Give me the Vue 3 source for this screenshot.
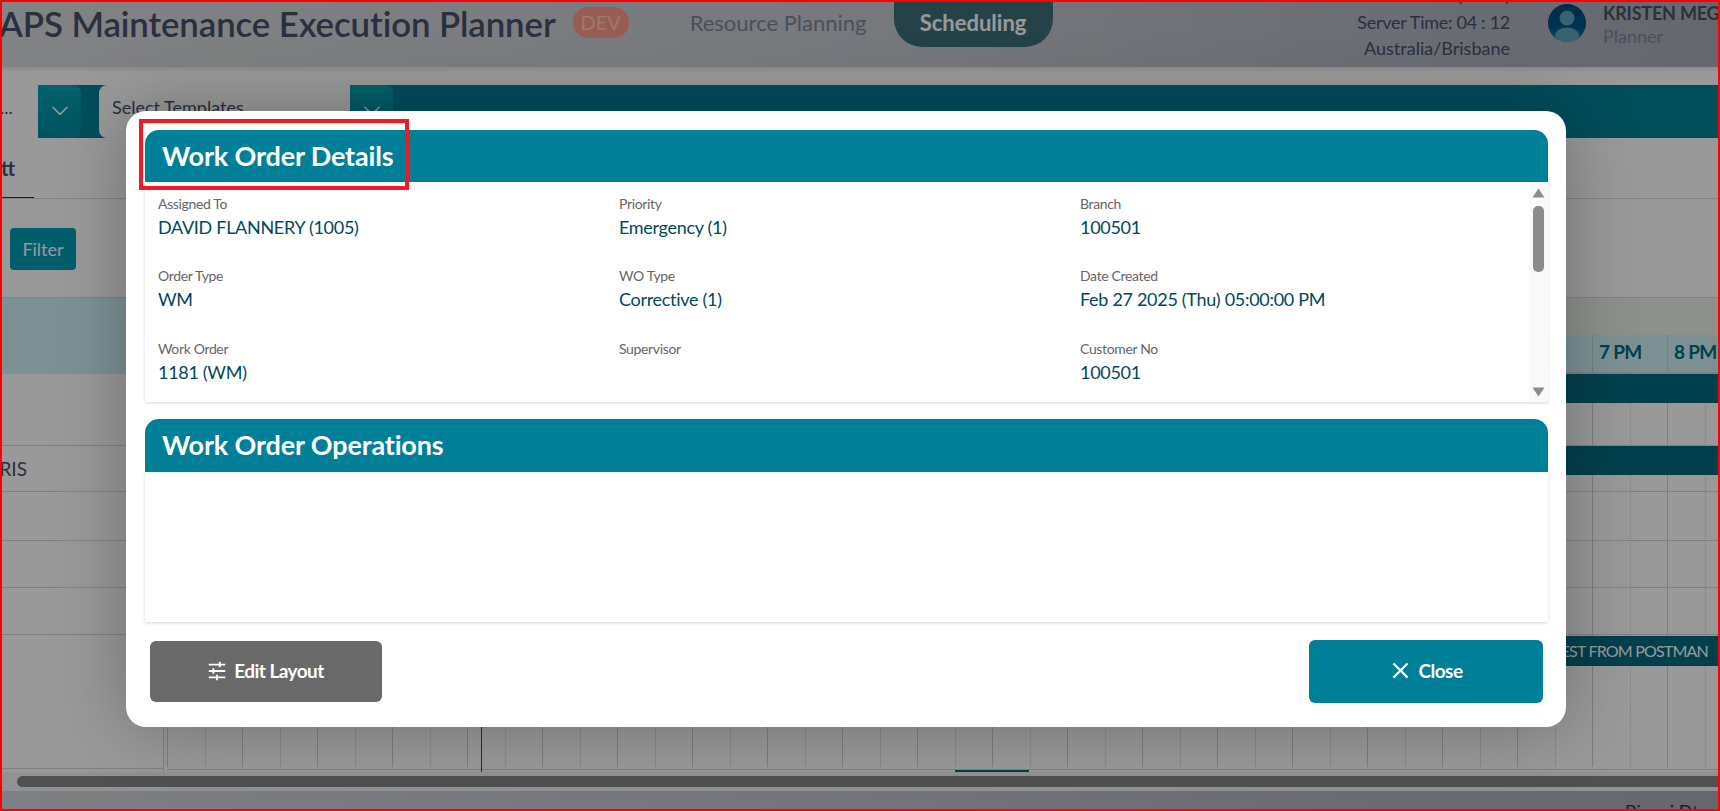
<template>
  <div class="page">
    <header class="topbar">
      <h1 class="app-title">APS Maintenance Execution Planner</h1>
      <span class="env-badge">DEV</span>
      <nav class="nav">
        <a class="nav-link">Resource Planning</a>
        <a class="nav-link active">Scheduling</a>
      </nav>
      <div class="clock">
        <div class="clock-local">Local Time (AEST)</div>
        <div class="clock-server">Server Time: 04 : 12</div>
        <div>Australia/Brisbane</div>
      </div>
      <div class="user">
        <svg class="avatar" viewBox="0 0 38 38">
          <defs>
            <linearGradient id="avatarBg" x1="0" y1="0" x2="0" y2="1">
              <stop offset="0" stop-color="#00467c" />
              <stop offset="0.6" stop-color="#00558a" />
              <stop offset="1" stop-color="#1b7f9f" />
            </linearGradient>
            <clipPath id="avatarClip"><circle cx="19" cy="19" r="19" /></clipPath>
          </defs>
          <circle cx="19" cy="19" r="19" fill="url(#avatarBg)" />
          <g clip-path="url(#avatarClip)" fill="#5aa3bd">
            <circle cx="19" cy="14" r="7.5" />
            <ellipse cx="19" cy="32" rx="12" ry="8.5" />
          </g>
        </svg>
        <div class="user-text">
          <div class="user-name">KRISTEN MEGAN</div>
          <div class="user-role">Planner</div>
        </div>
      </div>
    </header>

    <div class="toolbar">
      <div class="select first"><span>...</span></div>
      <button class="select-btn" type="button">
        <svg viewBox="0 0 24 24"><path d="M5 9l7 7 7-7" /></svg>
      </button>
      <div class="select templates"><span>Select Templates</span></div>
      <button class="select-btn" type="button">
        <svg viewBox="0 0 24 24"><path d="M5 9l7 7 7-7" /></svg>
      </button>
    </div>

    <div class="tabs">
      <span class="tab">Gantt</span>
    </div>

    <div class="filters">
      <button class="filter-btn" type="button">Filter</button>
    </div>

    <div class="gantt">
      <div class="gantt-left">
        <div class="left-head"></div>
        <div v-for="row in rows" :key="row.id" class="left-cell" :style="{ height: row.height + 'px' }">
          {{ row.label }}
        </div>
      </div>
      <div class="gantt-right">
        <div class="hours-band"></div>
        <div class="hours">
          <div v-for="h in hours" :key="h" class="hour">{{ h }}</div>
        </div>
        <div class="grid-rows">
          <div class="columns">
            <div v-for="h in hours" :key="h" class="column"></div>
          </div>
          <div v-for="row in rows" :key="row.id" class="grid-row" :style="{ height: row.height + 'px' }">
            <div v-if="row.bar" class="bar" :class="row.bar.kind">{{ row.bar.text }}</div>
          </div>
        </div>
        <div class="now-line"></div>
        <div class="range-mark"></div>
      </div>
    </div>

    <div class="scroll-track"><div class="scroll-thumb"></div></div>

    <footer class="footer"><span>Binnai Dt</span></footer>

    <div class="overlay">
      <section class="modal">
        <div class="panel-head first-head">Work Order Details</div>
        <div class="details">
          <div class="fields">
            <div v-for="f in fields" :key="f.label" class="field">
              <div class="field-label">{{ f.label }}</div>
              <div class="field-value">{{ f.value }}</div>
            </div>
          </div>
          <div class="scrollbar">
            <svg class="arrow" viewBox="0 0 13 10"><path d="M6.5 0.5L12.5 9.5H0.5Z" /></svg>
            <div class="thumb-track"><div class="thumb"></div></div>
            <svg class="arrow" viewBox="0 0 13 10"><path d="M0.5 0.5H12.5L6.5 9.5Z" /></svg>
          </div>
        </div>

        <div class="panel-head second-head">Work Order Operations</div>
        <div class="operations"></div>

        <div class="modal-actions">
          <button class="btn edit" type="button">
            <svg viewBox="0 0 24 24"><path d="M3 5h18M3 12h18M3 19h18M15 2v6M8 9v6M12 16v6" /></svg>
            Edit Layout
          </button>
          <button class="btn close" type="button">
            <svg viewBox="0 0 24 24"><path d="M19 6.41 17.59 5 12 10.59 6.41 5 5 6.41 10.59 12 5 17.59 6.41 19 12 13.41 17.59 19 19 17.59 13.41 12z" /></svg>
            Close
          </button>
        </div>
      </section>
    </div>

    <div class="highlight"></div>
    <div class="frame"></div>
  </div>
</template>

<script setup>
const fields = [
  { label: 'Assigned To', value: 'DAVID FLANNERY (1005)' },
  { label: 'Priority', value: 'Emergency (1)' },
  { label: 'Branch', value: '100501' },
  { label: 'Order Type', value: 'WM' },
  { label: 'WO Type', value: 'Corrective (1)' },
  { label: 'Date Created', value: 'Feb 27 2025 (Thu) 05:00:00 PM' },
  { label: 'Work Order', value: '1181 (WM)' },
  { label: 'Supervisor', value: '' },
  { label: 'Customer No', value: '100501' }
];

const rows = [
  { id: 1, height: 72, label: '', bar: { kind: 'group', text: '' } },
  { id: 2, height: 46, label: 'RIS', bar: { kind: 'group', text: '' } },
  { id: 3, height: 49, label: '' },
  { id: 4, height: 47, label: '' },
  { id: 5, height: 47, label: '' },
  { id: 6, height: 134, label: '', bar: { kind: 'task', text: 'TEST FROM POSTMAN' } }
];

const hours = [];
for (let i = 0; i < 21; i++) {
  const h = i % 12 === 0 ? 12 : i % 12;
  hours.push(`${h} ${i < 12 ? 'AM' : 'PM'}`);
}
</script>

<style>
html,
body {
  margin: 0;
  overflow: hidden;
}
</style>

<style scoped>
.page {
  position: relative;
  width: 1720px;
  height: 811px;
  overflow: hidden;
  display: flex;
  flex-direction: column;
  background: #fff;
  font-family: Lato, "Liberation Sans", sans-serif;
  color: #46506a;
}

.topbar {
  flex: 0 0 67px;
  display: flex;
  align-items: flex-start;
  overflow: hidden;
  background: linear-gradient(100deg, #d8dadc 0%, #c6c9d0 50%, #a8acb9 100%);
  box-shadow: 0 2px 5px rgba(0, 0, 0, 0.12);
  z-index: 1;
}

.app-title {
  margin: 2px 0 0 -1px;
  font-size: 34.8px;
  line-height: 44px;
  font-weight: 600;
  letter-spacing: -0.1px;
  color: #47506a;
  white-space: nowrap;
}

.env-badge {
  margin: 7px 0 0 17px;
  width: 56px;
  height: 31px;
  border-radius: 15px;
  background: #ff9a8a;
  color: #ffc9bd;
  font-size: 20px;
  line-height: 31px;
  text-align: center;
}

.nav {
  display: flex;
  align-items: flex-start;
  margin-left: 61px;
}

.nav-link {
  font-size: 22px;
  line-height: 45px;
  color: #7d8499;
  white-space: nowrap;
}

.nav-link.active {
  margin: -10px 0 0 27px;
  width: 159px;
  height: 57px;
  line-height: 66px;
  border-radius: 0 0 28px 28px;
  background: #3d6e78;
  color: #fff;
  font-size: 22px;
  font-weight: 700;
  text-align: center;
}

.clock {
  margin: -18px 0 0 auto;
  text-align: right;
  font-size: 18px;
  line-height: 26px;
  color: #47506a;
  white-space: nowrap;
}

.clock-local {
  margin-bottom: 1px;
}

.clock-server {
  letter-spacing: -0.28px;
}

.user {
  flex: 0 0 172px;
  margin-left: 38px;
  display: flex;
  gap: 17px;
  overflow: hidden;
}

.avatar {
  flex: 0 0 38px;
  width: 38px;
  height: 38px;
  margin-top: 4px;
}

.user-text {
  white-space: nowrap;
}

.user-name {
  margin-top: 2px;
  font-size: 18px;
  line-height: 23px;
  font-weight: 700;
  letter-spacing: -0.2px;
  color: #47506a;
}

.user-role {
  font-size: 18px;
  line-height: 23px;
  color: #7d8499;
}

.toolbar {
  margin-top: 18px;
  flex: 0 0 53px;
  display: flex;
  background: #008099;
}

.select {
  background: #fff;
  font-size: 18px;
  line-height: 44px;
  color: #47506a;
}

.select.first {
  width: 38px;
  text-align: left;
}

.select.templates {
  width: 251px;
  margin-left: 18px;
  padding-left: 13px;
  box-sizing: border-box;
  border-radius: 8px 0 0 8px;
}

.select-btn {
  width: 43px;
  padding: 0;
  border: none;
  border-radius: 0 8px 8px 0;
  background: linear-gradient(180deg, #00a4b4 0%, #008ba2 100%);
  display: flex;
  align-items: center;
  justify-content: center;
}

.select-btn svg {
  width: 26px;
  height: 26px;
  margin-top: -4px;
  fill: none;
  stroke: #fff;
  stroke-width: 1.4;
}

.tabs {
  flex: 0 0 61px;
  box-sizing: border-box;
  border-bottom: 1px solid #ddd;
  position: relative;
  overflow: hidden;
}

.tab {
  position: absolute;
  right: calc(100% - 15px);
  top: 17px;
  font-size: 20px;
  line-height: 26px;
  font-weight: 700;
  color: #47506a;
}

.tabs::after {
  content: "";
  position: absolute;
  left: 0;
  bottom: -1px;
  width: 34px;
  height: 2px;
  background: #0b3b45;
}

.filters {
  flex: 0 0 99px;
  box-sizing: border-box;
  padding: 29px 0 0 10px;
  border-bottom: 1px solid #d6d6d6;
}

.filter-btn {
  width: 66px;
  height: 42px;
  padding: 0;
  border: none;
  border-radius: 4px;
  background: #009cb4;
  color: #fff;
  font-family: inherit;
  font-size: 18px;
}

.gantt {
  flex: 0 0 474px;
  display: flex;
  gap: 3px;
  overflow: hidden;
}

.gantt-left {
  flex: 0 0 164px;
  min-width: 0;
  box-sizing: border-box;
  border-right: 1px solid #d6d6d6;
}

.left-head {
  height: 76px;
  background: #d0f2f8;
}

.left-cell {
  box-sizing: border-box;
  border-bottom: 1px solid #d6d6d6;
  display: flex;
  align-items: center;
  justify-content: flex-end;
  padding-right: 136px;
  font-size: 19px;
  color: #47506a;
  white-space: nowrap;
}

.gantt-right {
  position: relative;
  flex: 1;
  min-width: 0;
}

.hours-band {
  height: 37px;
  background: #edf2e8;
}

.hours {
  display: flex;
  height: 39px;
  box-sizing: border-box;
  border-bottom: 2px solid #cfd8d8;
  background: #d0f2f8;
}

.hour {
  flex: 0 0 75px;
  box-sizing: border-box;
  border-left: 1px solid #b9d4da;
  padding-left: 6px;
  font-size: 19px;
  line-height: 34px;
  font-weight: 700;
  letter-spacing: -0.7px;
  color: #006b85;
  white-space: nowrap;
}

.grid-rows {
  position: relative;
}

.columns {
  position: absolute;
  inset: 0 0 3px 0;
  display: flex;
}

.column {
  flex: 0 0 75px;
  box-sizing: border-box;
  border-left: 1px solid #d2d2d2;
  position: relative;
}

.column::after {
  content: "";
  position: absolute;
  left: 37px;
  top: 0;
  bottom: 0;
  border-left: 1px dotted #d2d2d2;
}

.grid-row {
  position: relative;
  box-sizing: border-box;
  border-bottom: 1px solid #d6d6d6;
}

.bar {
  height: 29px;
  background: #006b80;
}

.bar.task {
  height: 30px;
  margin: 1px 0 0 1210px;
  padding-right: 12px;
  text-align: right;
  color: #fff;
  font-size: 16px;
  letter-spacing: -0.8px;
  line-height: 30px;
  white-space: nowrap;
}

.now-line {
  position: absolute;
  left: 314px;
  top: 76px;
  bottom: 0;
  width: 1px;
  background: #ff0000;
}

.range-mark {
  position: absolute;
  left: 788px;
  bottom: 0;
  width: 74px;
  height: 2px;
  background: #006b80;
}

.scroll-track {
  flex: 0 0 19px;
  box-sizing: border-box;
  padding: 4px 0 4px 17px;
  background: #f4f4f4;
}

.scroll-thumb {
  height: 11px;
  border-radius: 6px 0 0 6px;
  background: #888;
}

.footer {
  flex: 1;
  position: relative;
  overflow: hidden;
  background: linear-gradient(100deg, #d2d6da 0%, #bfc3cc 50%, #a8acb9 100%);
}

.footer span {
  position: absolute;
  left: 1625px;
  top: 9px;
  font-size: 18px;
  color: #1d3552;
  white-space: nowrap;
}

.overlay {
  position: absolute;
  inset: 0;
  z-index: 2;
  background: rgba(0, 0, 0, 0.4);
  padding: 111px 0 0 126px;
}

.modal {
  width: 1440px;
  height: 616px;
  box-sizing: border-box;
  padding: 19px 18px 0 19px;
  border-radius: 20px;
  background: #fff;
  box-shadow: 0 0 70px rgba(0, 0, 0, 0.28);
  display: flex;
  flex-direction: column;
}

.panel-head {
  box-sizing: border-box;
  padding-left: 17px;
  border-radius: 14px 14px 0 0;
  background: #007f99;
  color: #fff;
  font-size: 27px;
  letter-spacing: -0.15px;
  font-weight: 700;
}

.first-head {
  flex: 0 0 52px;
  line-height: 52px;
}

.second-head {
  flex: 0 0 53px;
  line-height: 52px;
  margin-top: 17px;
}

.details,
.operations {
  box-shadow: 0 1px 3px rgba(0, 0, 0, 0.16);
}

.details {
  flex: 0 0 220px;
  display: flex;
  overflow: hidden;
}

.fields {
  flex: 1;
  min-width: 0;
  display: grid;
  grid-template-columns: 461px 461px 1fr;
  grid-auto-rows: 72.5px;
  padding: 12.9px 0 0 13px;
}

.field-label {
  font-size: 14px;
  letter-spacing: -0.35px;
  line-height: 18px;
  color: #666;
}

.field-value {
  margin-top: 2px;
  font-size: 18px;
  letter-spacing: -0.3px;
  line-height: 24px;
  color: #00495c;
}

.scrollbar {
  flex: 0 0 19px;
  box-sizing: border-box;
  padding: 6px 3px 5px;
  background: #fafafa;
  display: flex;
  flex-direction: column;
  justify-content: space-between;
}

.arrow {
  width: 13px;
  height: 10px;
  flex: none;
  fill: #8c8c8c;
}

.thumb-track {
  flex: 1;
  padding-top: 8px;
}

.thumb {
  width: 11px;
  margin-left: 1px;
  height: 66px;
  border-radius: 5px;
  background: #8c8c8c;
}

.operations {
  flex: 0 0 150px;
}

.modal-actions {
  display: flex;
  justify-content: space-between;
  align-items: center;
  padding: 18px 5px 0;
}

.btn {
  display: flex;
  align-items: center;
  justify-content: center;
  padding: 0 0 2px;
  border: none;
  border-radius: 6px;
  color: #fff;
  font-family: inherit;
  font-size: 19px;
  font-weight: 700;
}

.btn.edit {
  width: 232px;
  height: 61px;
  gap: 6px;
  background: #696969;
  letter-spacing: -0.55px;
}

.btn.edit svg {
  width: 22px;
  height: 22px;
  margin-left: -2px;
  fill: none;
  stroke: #fff;
  stroke-width: 2;
}

.btn.close {
  width: 234px;
  height: 63px;
  gap: 4px;
  background: #007f99;
  letter-spacing: -0.5px;
}

.btn.close svg {
  width: 27px;
  height: 27px;
  margin-left: -2px;
  fill: #fff;
}

.highlight {
  position: absolute;
  z-index: 3;
  left: 139px;
  top: 119px;
  width: 270px;
  height: 71px;
  box-sizing: border-box;
  border: 4px solid #ed1c24;
}

.frame {
  position: absolute;
  z-index: 3;
  inset: 0;
  border: 2px solid #ff0000;
  pointer-events: none;
}
</style>
